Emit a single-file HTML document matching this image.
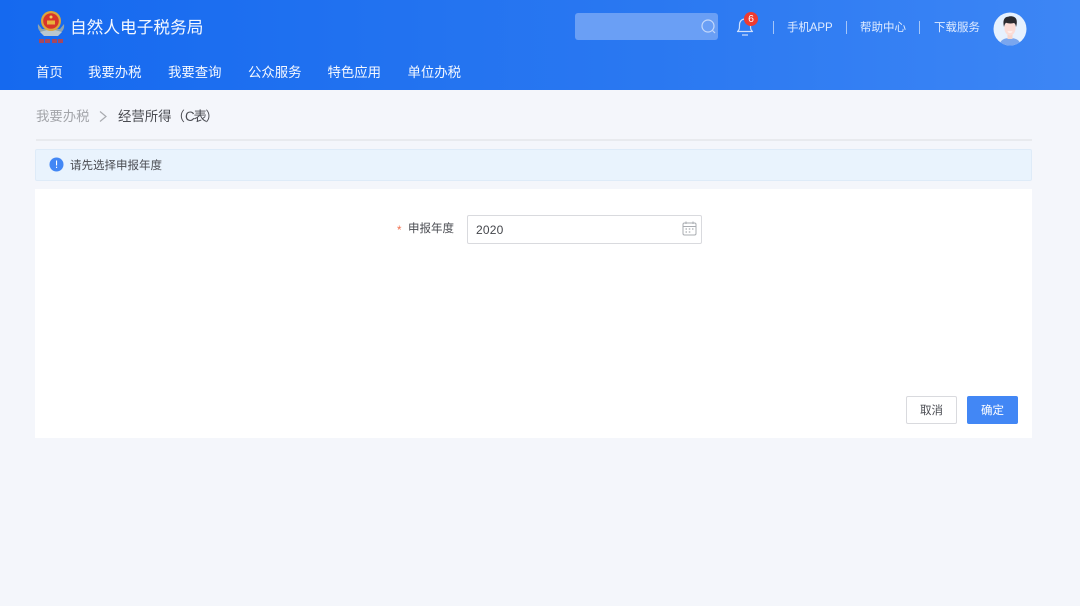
<!DOCTYPE html>
<html lang="zh-CN">
<head>
<meta charset="utf-8">
<title>自然人电子税务局</title>
<style>
html,body{margin:0;padding:0;width:1080px;height:606px;overflow:hidden;background:#f4f6fb;}
body{position:relative;font-family:"Liberation Sans","Noto Sans CJK SC",sans-serif;}
.a{position:absolute;white-space:nowrap;line-height:1;}
.hdr{position:absolute;left:0;top:0;width:1080px;height:90px;background:linear-gradient(90deg,#1569ef 0%,#2a78f1 60%,#3d86f5 100%);}
.nav{color:#f4f8ff;font-size:13.4px;top:66px;}
.top{color:#dfebff;font-size:11.5px;top:23px;}
.sep{position:absolute;width:1px;height:13px;top:21px;background:#a5c6f8;}
svg{position:absolute;display:block;}
</style>
</head>
<body>
<div class="hdr"></div>

<svg style="left:36px;top:9px" width="30" height="36" viewBox="0 0 30 36">
  <path d="M2 15 C1 22 6 26 15 26 C24 26 29 22 28 15 L24 20 L6 20Z" fill="#8fa3ad"/>
  <path d="M4 23 L15 20 L26 23 L22 27 L8 27Z" fill="#b9c7cf"/>
  <circle cx="15" cy="12" r="10" fill="#dca53c"/>
  <circle cx="15" cy="12" r="7.8" fill="#d8352a"/>
  <rect x="11" y="11.5" width="8" height="4" fill="#e9b23c"/>
  <circle cx="15" cy="8" r="1.5" fill="#f2cc5a"/>
  <g fill="#c9403c" opacity=".8">
    <rect x="3" y="30" width="5" height="4"/>
    <rect x="9" y="30" width="5" height="4"/>
    <rect x="16" y="30" width="5" height="4"/>
    <rect x="22" y="30" width="5" height="4"/>
  </g>
</svg>
<div class="a" style="left:70px;top:20px;font-size:16.7px;color:#f4f8ff;">自然人电子税务局</div>

<div class="a nav" style="left:36px;">首页</div>
<div class="a nav" style="left:88px;">我要办税</div>
<div class="a nav" style="left:168px;">我要查询</div>
<div class="a nav" style="left:248px;">公众服务</div>
<div class="a nav" style="left:327.5px;">特色应用</div>
<div class="a nav" style="left:407.5px;">单位办税</div>

<div style="position:absolute;left:575px;top:13px;width:143px;height:27px;border-radius:3px;background:#6a9ff5;"></div>
<svg style="left:700px;top:18px" width="17" height="17" viewBox="0 0 17 17" fill="none" stroke="#c3d8fb" stroke-width="1.2">
  <circle cx="8" cy="8" r="6"/>
  <path d="M12.5 12.5 L15 15"/>
</svg>

<svg style="left:735px;top:16px" width="20" height="21" viewBox="0 0 20 21" fill="none" stroke="#cfe0fc" stroke-width="1.2">
  <path d="M2.5 15.5 C4.5 14 4.5 12 4.5 9 C4.5 5.5 6.5 3 10 3 C13.5 3 15.5 5.5 15.5 9 C15.5 12 15.5 14 17.5 15.5 Z" stroke-linejoin="round"/>
  <path d="M7 19 H13"/>
</svg>
<div class="a" style="left:744px;top:12px;width:14px;height:14px;border-radius:50%;background:#ee3b30;color:#fff;font-size:10.5px;line-height:14px;text-align:center;">6</div>

<div class="sep" style="left:773px;"></div>
<div class="a top" style="left:787px;letter-spacing:-.1px;">手机APP</div>
<div class="sep" style="left:846px;"></div>
<div class="a top" style="left:860px;">帮助中心</div>
<div class="sep" style="left:919px;"></div>
<div class="a top" style="left:934px;">下载服务</div>

<svg style="left:993px;top:12px" width="34" height="34" viewBox="0 0 34 34">
  <defs><clipPath id="c"><circle cx="17" cy="17" r="16.5"/></clipPath></defs>
  <circle cx="17" cy="17" r="16.5" fill="#e6f1fe"/>
  <g clip-path="url(#c)">
    <path d="M6 34 C7 28 11 26 17 26 C23 26 27 28 28 34Z" fill="#7aa6ee"/>
    <rect x="14.5" y="20" width="5" height="7" fill="#f6d5cc"/>
    <ellipse cx="17" cy="16" rx="5.6" ry="7.5" fill="#fbdcd6"/>
    <path d="M11 15 C9.5 9 11 5 15 4.8 C16 4 20 4 21 5 C24 6 24.5 10 23 15 C22.6 12.5 22 11.5 21 11 C18 11.8 15 11.5 13 10.8 C12 11.8 11.4 13 11 15Z" fill="#2b2b30"/>
    <path d="M14.5 19.5 H19.5 C19 21 15 21 14.5 19.5Z" fill="#fff"/>
  </g>
</svg>

<div class="a" style="left:36px;top:110px;font-size:13.4px;color:#a3a5aa;">我要办税</div>
<svg style="left:98px;top:110px" width="10" height="13" viewBox="0 0 10 13" fill="none" stroke="#a9abb0" stroke-width="1.2">
  <path d="M2 1.5 L8 6.5 L2 11.5"/>
</svg>
<div class="a" style="left:118px;top:110px;font-size:13.4px;color:#4a4c52;">经营所得（<span style="letter-spacing:-1.2px;">C</span>表<span style="margin-left:-1.5px;">）</span></div>

<div style="position:absolute;left:36px;top:139px;width:996px;height:2px;background:#e8eaee;"></div>

<div style="position:absolute;left:35px;top:149px;width:995px;height:30px;background:#e9f3fd;border:1px solid #deebf8;border-radius:2px;"></div>
<svg style="left:49px;top:157px" width="15" height="15" viewBox="0 0 15 15">
  <circle cx="7.5" cy="7.5" r="7" fill="#4287f5"/>
  <rect x="7" y="3.5" width="1.1" height="5" fill="#fff"/>
  <rect x="7" y="9.7" width="1.1" height="1.3" fill="#fff"/>
</svg>
<div class="a" style="left:70px;top:160.5px;font-size:11.5px;color:#4a4c52;">请先选择申报年度</div>

<div style="position:absolute;left:35px;top:189px;width:997px;height:249px;background:#fff;"></div>

<div class="a" style="left:397px;top:226px;font-size:11.5px;color:#f0704f;">*</div>
<div class="a" style="left:408px;top:224px;font-size:11.5px;color:#4a4c52;">申报年度</div>
<div style="position:absolute;left:467px;top:215px;width:233px;height:27px;background:#fff;border:1px solid #d9dade;border-radius:2px;"></div>
<div class="a" style="left:476px;top:223.5px;font-size:12px;color:#45474c;letter-spacing:.2px;">2020</div>
<svg style="left:682px;top:221px" width="15" height="15" viewBox="0 0 15 15" fill="none" stroke="#a9acb1" stroke-width="1">
  <rect x="1" y="2" width="13" height="12" rx="1.5"/>
  <path d="M1 5.5 H14 M4 .5 V3 M11 .5 V3"/>
  <path d="M3.5 8 H5 M6.8 8 H8.3 M10 8 H11.5 M3.5 11 H5 M6.8 11 H8.3" stroke-width="1.2"/>
</svg>

<div style="position:absolute;left:906px;top:396px;width:49px;height:26px;border:1px solid #d9dade;border-radius:2px;background:#fff;"></div>
<div class="a" style="left:920px;top:406px;font-size:11.5px;color:#4a4c52;">取消</div>
<div style="position:absolute;left:967px;top:396px;width:51px;height:28px;border-radius:2px;background:#4287f5;"></div>
<div class="a" style="left:981px;top:406px;font-size:11.5px;color:#fff;">确定</div>
</body>
</html>
